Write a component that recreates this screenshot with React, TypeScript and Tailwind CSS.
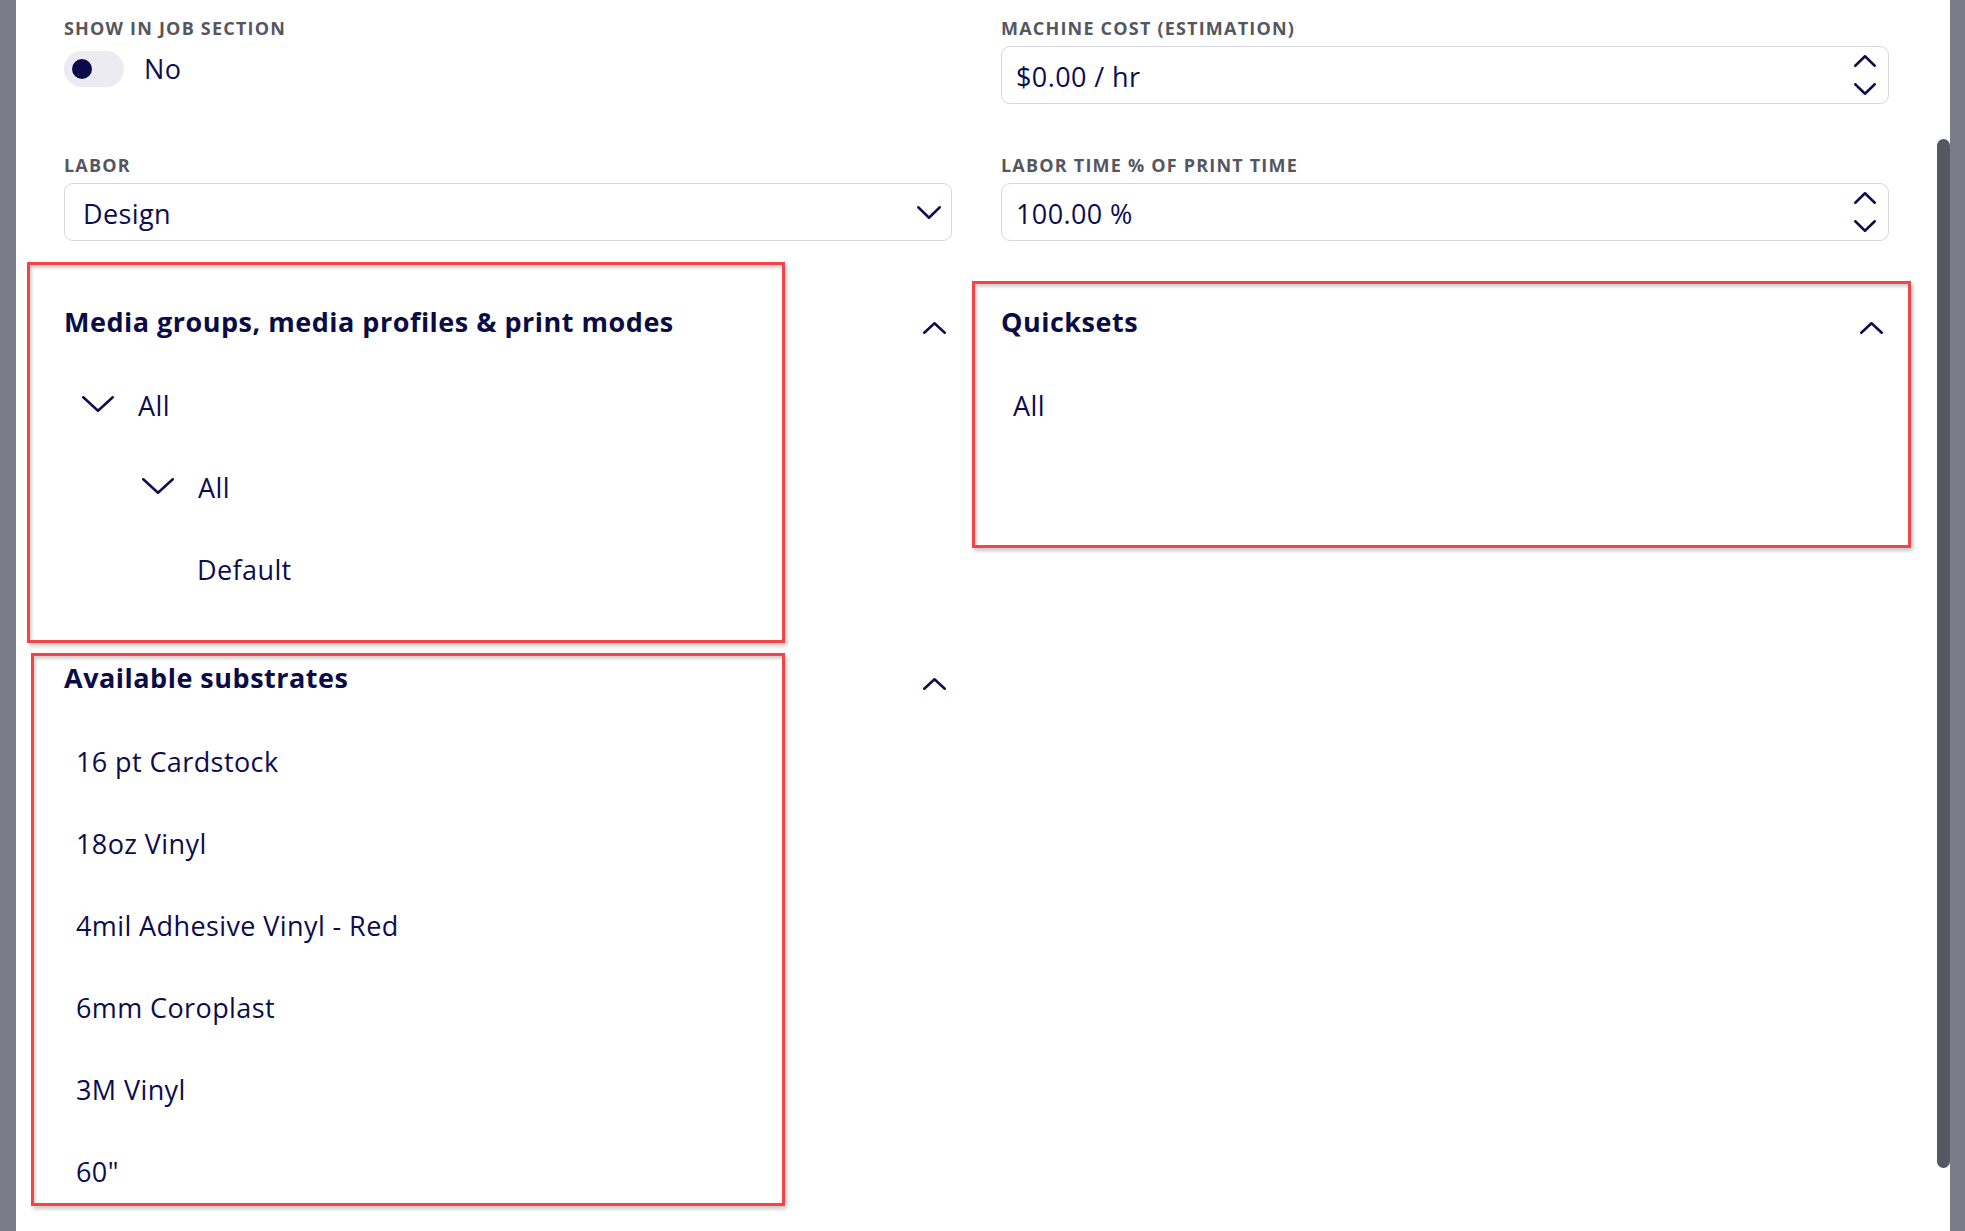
import React from 'react';

const Chevron = ({ dir, w, h, stroke = 2.5 }: { dir: 'up' | 'down'; w: number; h: number; stroke?: number }) => {
  const pts =
    dir === 'down'
      ? `${stroke / 2},${stroke / 2} ${w / 2},${h - stroke / 2} ${w - stroke / 2},${stroke / 2}`
      : `${stroke / 2},${h - stroke / 2} ${w / 2},${stroke / 2} ${w - stroke / 2},${h - stroke / 2}`;
  return (
    <svg width={w} height={h} viewBox={`0 0 ${w} ${h}`} fill="none">
      <polyline points={pts} stroke="#0d0d4d" strokeWidth={stroke} strokeLinecap="round" strokeLinejoin="round" />
    </svg>
  );
};

const Label = ({ children }: { children: React.ReactNode }) => (
  <div className="text-[18px] leading-[22px] font-bold uppercase tracking-[1.2px] text-[#55565f]">{children}</div>
);

const NumberInput = ({ value }: { value: string }) => (
  <div className="mt-[7px] h-[58px] rounded-[9px] border border-[#d6d6de] flex items-center justify-between pl-[14px] pr-[12px]">
    <span className="pt-[4px] text-[27px] tracking-[0.4px] text-[#0d0d4d]">{value}</span>
    <div className="flex flex-col items-center gap-[16px]">
      <Chevron dir="up" w={22} h={12} />
      <Chevron dir="down" w={22} h={12} />
    </div>
  </div>
);

const SectionHeader = ({ title }: { title: string }) => (
  <div className="flex items-start justify-between">
    <h3 className="pt-[1px] text-[27px] leading-[35px] font-bold tracking-[0.5px] text-[#0b0b45]">{title}</h3>
    <div className="mt-[19px] mr-[6px]">
      <Chevron dir="up" w={23} h={12} stroke={2.5} />
    </div>
  </div>
);

const RedMark = ({ className }: { className: string }) => (
  <div
    className={`absolute pointer-events-none border-[3px] border-[#f2454a] shadow-[inset_2px_3px_3px_rgba(0,0,0,0.18),2px_3px_4px_rgba(0,0,0,0.22)] ${className}`}
  />
);

const substrates = ['16 pt Cardstock', '18oz Vinyl', '4mil Adhesive Vinyl - Red', '6mm Coroplast', '3M Vinyl', '60"'];

const App: React.FC = () => {
  return (
    <div className="flex h-[1231px] w-full overflow-hidden bg-white" style={{ fontFamily: '"Open Sans", "Noto Sans", sans-serif' }}>
      <div className="w-4 shrink-0 bg-[#7b7c89]" />

      <div className="flex-1 min-w-0 px-12 pt-[17px]">
        <div className="grid grid-cols-2 gap-x-[49px]">
          {/* Show in job section */}
          <div>
            <Label>Show in job section</Label>
            <div className="mt-[10px] flex items-center gap-[20px]">
              <div className="w-[60px] h-[36px] rounded-full bg-[#ebebf1] flex items-center pl-[8px]">
                <div className="w-[20px] h-[20px] rounded-full bg-[#0a0a4a]" />
              </div>
              <span className="text-[27px] tracking-[0.4px] text-[#0d0d4d]">No</span>
            </div>
          </div>

          {/* Machine cost */}
          <div>
            <Label>Machine cost (estimation)</Label>
            <NumberInput value="$0.00 / hr" />
          </div>

          {/* Labor */}
          <div className="mt-[50px]">
            <Label>Labor</Label>
            <div className="mt-[7px] h-[58px] rounded-[9px] border border-[#d6d6de] flex items-center justify-between pl-[18px] pr-[10px]">
              <span className="pt-[4px] text-[27px] tracking-[0.4px] text-[#0d0d4d]">Design</span>
              <Chevron dir="down" w={24} h={13} />
            </div>
          </div>

          {/* Labor time */}
          <div className="mt-[50px]">
            <Label>Labor time % of print time</Label>
            <NumberInput value="100.00 %" />
          </div>

          {/* Media groups */}
          <div className="relative mt-[62px]">
            <RedMark className="-left-[37px] -top-[41px] w-[758px] h-[381px]" />
            <SectionHeader title="Media groups, media profiles & print modes" />
            <div className="mt-[24px] flex flex-col text-[27px] tracking-[0.4px] text-[#0d0d4d]">
              <div className="h-[82px] flex items-center gap-6 pl-[18px]">
                <Chevron dir="down" w={32} h={16} stroke={2.5} />
                <span className="pt-[4px]">All</span>
              </div>
              <div className="h-[82px] flex items-center gap-6 pl-[78px]">
                <Chevron dir="down" w={32} h={16} stroke={2.5} />
                <span className="pt-[4px]">All</span>
              </div>
              <div className="h-[82px] flex items-center pl-[133px]">
                <span className="pt-[4px]">Default</span>
              </div>
            </div>
          </div>

          {/* Quicksets */}
          <div className="relative mt-[62px]">
            <RedMark className="-left-[29px] -top-[22px] w-[939px] h-[267px]" />
            <SectionHeader title="Quicksets" />
            <div className="mt-[24px] flex flex-col text-[27px] tracking-[0.4px] text-[#0d0d4d]">
              <div className="h-[82px] flex items-center pl-[12px]">
                <span className="pt-[4px]">All</span>
              </div>
            </div>
          </div>

          {/* Available substrates */}
          <div className="relative mt-[50px]">
            <RedMark className="-left-[33px] -top-[6px] w-[754px] h-[553px]" />
            <SectionHeader title="Available substrates" />
            <div className="mt-[24px] flex flex-col text-[27px] tracking-[0.4px] text-[#0d0d4d]">
              {substrates.map((s) => (
                <div key={s} className="h-[82px] flex items-center pl-[12px]">
                  <span className="pt-[4px]">{s}</span>
                </div>
              ))}
            </div>
          </div>
          <div />
        </div>
      </div>

      {/* scrollbar */}
      <div className="w-[13px] shrink-0">
        <div className="mt-[139px] h-[1029px] rounded-t-full rounded-b-full bg-[#555761]" />
      </div>
      <div className="w-[15px] shrink-0 bg-[#7b7c89]" />
    </div>
  );
};

export default App;
